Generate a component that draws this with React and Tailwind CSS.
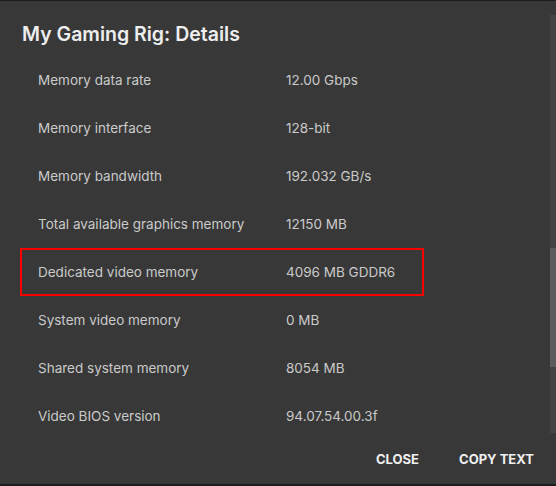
import React from "react";

const rows = [
  ["Memory data rate", "12.00 Gbps"],
  ["Memory interface", "128-bit"],
  ["Memory bandwidth", "192.032 GB/s"],
  ["Total available graphics memory", "12150 MB"],
  ["Dedicated video memory", "4096 MB GDDR6", true],
  ["System video memory", "0 MB"],
  ["Shared system memory", "8054 MB"],
  ["Video BIOS version", "94.07.54.00.3f"],
];

export default function App() {
  return (
    <div
      className="w-[556px] h-[486px] bg-[#1c1c1c] pt-px pb-[2px] overflow-hidden"
      style={{ fontFamily: "Inter, 'Noto Sans', sans-serif" }}
    >
      <div className="relative h-full bg-[#383838] flex flex-col">
        <div className="h-[55px] pl-[22px] pt-[20px] text-[19.5px] font-semibold text-[#eeeeee] leading-[26px]">
          My Gaming Rig: Details
        </div>
        <div className="h-[384px] overflow-hidden flex flex-col">
          {rows.map(([k, v, hl]) => (
            <div key={k} className="h-[48px] shrink-0 px-[20px]">
              <div
                className={
                  "h-full flex items-center text-[13.5px] text-[#cacaca] " +
                  (hl ? "border-2 border-[#ff0000] w-[404px]" : "border-2 border-transparent")
                }
              >
                <div className="w-[264px] pl-[16px]">{k}</div>
                <div>{v}</div>
              </div>
            </div>
          ))}
        </div>
        <div className="flex-1 flex items-start pt-[10px] justify-end pr-[22px] gap-[40px] text-[13px] font-bold text-[#f0f0f0]">
          <span>CLOSE</span>
          <span>COPY TEXT</span>
        </div>
        <div className="absolute right-0 top-[14px] w-[6px] h-[418px] bg-[#444444]">
          <div className="mt-[233px] h-[119px] bg-[#5c5c5c]" />
        </div>
      </div>
    </div>
  );
}
